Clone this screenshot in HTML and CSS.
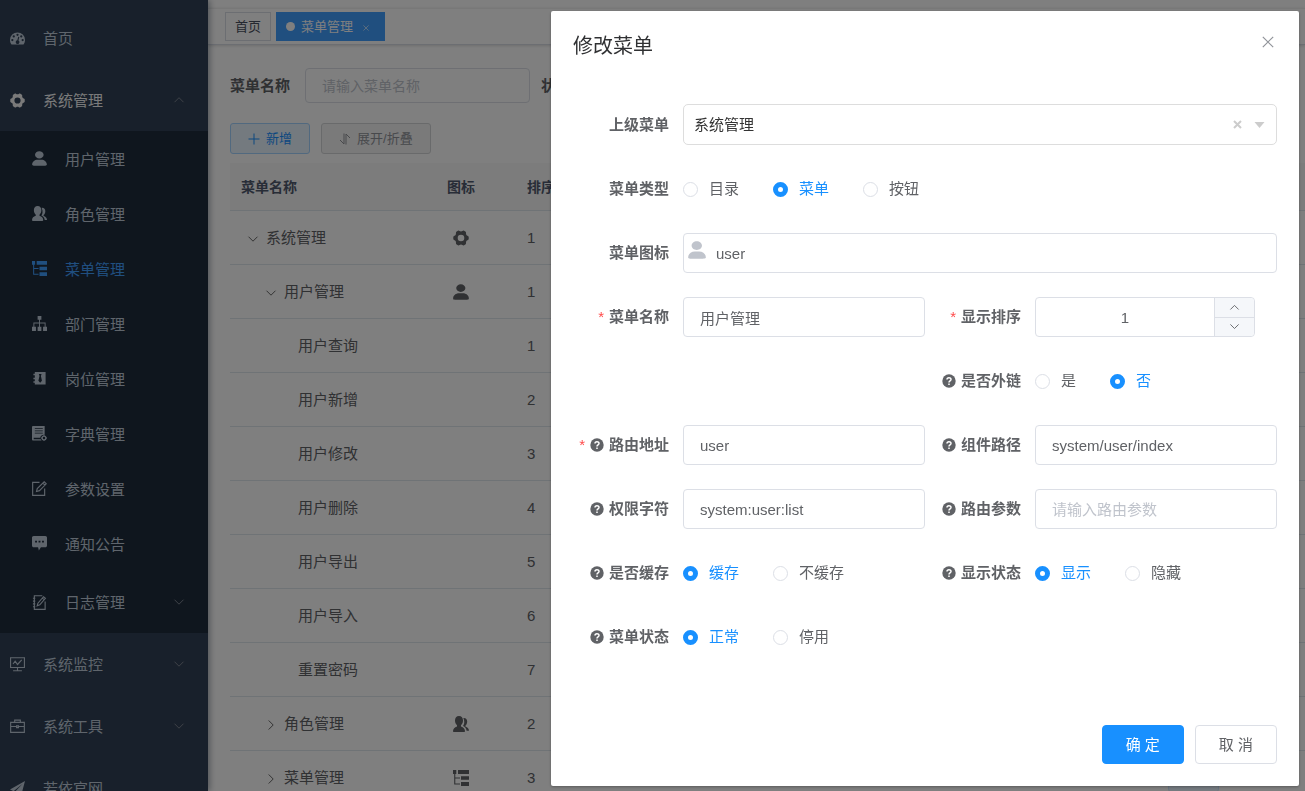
FILE: index.html
```html
<!DOCTYPE html>
<html lang="zh-CN">
<head>
<meta charset="utf-8">
<meta name="viewport" content="width=device-width, initial-scale=1">
<title>菜单管理</title>
<link rel="stylesheet" href="styles.css">
</head>
<body>
<svg class="sprite" aria-hidden="true">
  <symbol id="i-dashboard" viewBox="0 0 16 16"><path fill-rule="evenodd" d="M8 1.500A8 8 0 0 0 0 9.500C0 11.300.6 13 1.600 14.400H14.400C15.400 13 16 11.300 16 9.500A8 8 0 0 0 8 1.500ZM8 2.800a1.200 1.200 0 1 1 0 2.400 1.200 1.200 0 0 1 0-2.400ZM4 4.600a1.200 1.200 0 1 1 0 2.400 1.200 1.200 0 0 1 0-2.400ZM12 4.600a1.200 1.200 0 1 1 0 2.400 1.200 1.200 0 0 1 0-2.400ZM2.500 8.500a1.200 1.200 0 1 1 0 2.400 1.200 1.200 0 0 1 0-2.400ZM13.500 8.500a1.200 1.200 0 1 1 0 2.400 1.200 1.200 0 0 1 0-2.400ZM8.800 6.200 9.900 6.500 9 10a2 2 0 1 1-1.200-.2Z"/></symbol>
  <symbol id="i-system" viewBox="0 0 16 16"><path fill-rule="evenodd" d="M5.300.6C6.200.4 6.700 1.400 8 1.400S9.800.4 10.700.6L12.700 1.800C13.400 2.600 12.700 3.600 13.300 4.700 13.900 5.800 15.300 5.700 15.700 6.700V9.300C15.300 10.300 13.900 10.200 13.300 11.300 12.700 12.400 13.400 13.400 12.700 14.200L10.700 15.400C9.800 15.600 9.300 14.600 8 14.600S6.200 15.600 5.300 15.400L3.300 14.200C2.600 13.400 3.300 12.400 2.700 11.300 2.100 10.200.7 10.300.3 9.300V6.700C.7 5.700 2.100 5.800 2.700 4.700 3.300 3.600 2.600 2.600 3.300 1.800ZM8 4.700A3.300 3.300 0 1 0 8 11.300 3.300 3.300 0 0 0 8 4.700Z"/></symbol>
  <symbol id="i-user" viewBox="0 0 130 130"><path d="M63.444 64.996c20.633 0 37.359-14.308 37.359-31.953 0-17.649-16.726-31.952-37.359-31.952-20.631 0-37.360 14.303-37.360 31.952 0 17.645 16.729 31.953 37.360 31.953zM80.570 75.650H49.434c-26.652 0-48.260 18.477-48.260 41.270v2.664c0 9.316 21.608 9.325 48.260 9.325H80.570c26.649 0 48.256-.344 48.256-9.325v-2.663c0-22.794-21.605-41.271-48.256-41.271z"/></symbol>
  <symbol id="i-peoples" viewBox="0 0 16 16"><path d="M6 0C8.600 0 10 2 10 4.500 10 6.500 9.200 8.200 8 9.200V10.400C10.500 11.200 11.800 12.600 12 15 12 15.700 11.600 16 11 16H1C.4 16 0 15.700 0 15 .2 12.600 1.500 11.200 4 10.400V9.200C2.800 8.200 2 6.500 2 4.500 2 2 3.400 0 6 0Z"/><path d="M10.300 2C12.800 1.700 14.200 3.400 14.200 5.500 14.200 7.400 13.400 8.900 12.400 9.700V10.600C14.500 11.300 15.900 12.700 16 14.800H13.600C13.300 12.500 12 10.900 10 10 11.300 8.500 11.900 5.300 10.300 2Z"/></symbol>
  <symbol id="i-treetable" viewBox="0 0 16 16"><path d="M0 0H3.300V4H0ZM5 0H16V4H5ZM8 6.200H16V9.800H8ZM8 12H16V16H8ZM1.200 4H2.300V7.500H7V8.600H2.300V13.500H7V14.600H1.200Z"/></symbol>
  <symbol id="i-tree" viewBox="0 0 16 16"><path d="M6 0H10V4H8.500V7H14.500V11.500H16V16H11.800V11.500H13.500V8H8.500V11.500H10V16H6V11.500H7.500V8H2.500V11.500H4.200V16H0V11.500H1.500V7H7.500V4H6Z"/></symbol>
  <symbol id="i-post" viewBox="0 0 16 16"><path fill-rule="evenodd" d="M3 1H14.500V14.500H3V12.500H1.500V11H3V8.700H1.500V7.200H3V4.500H1.500V3H3ZM7.300 3.300 8 5.200 6.800 10.500 8.700 12.500 10.600 10.500 9.500 5.200 10.200 3.300Z"/></symbol>
  <symbol id="i-dict" viewBox="0 0 16 16"><path fill-rule="evenodd" d="M1 0H13.500V9.500C11 9.200 9 10.700 8.800 12.500H1.800V14H9.200L10.200 15.500H1.500C.5 15.500 0 15 0 14V1C0 .4.4 0 1 0ZM3 2.200V3H11.500V2.200ZM3 4.700V5.500H11.500V4.700ZM3 7.200V8H11.500V7.200Z"/><circle cx="12.800" cy="12.800" r="2" fill="none" stroke="currentColor" stroke-width="1.400"/><path d="M12.300 9.600h1v1h-1zM12.300 15h1v1h-1zM9.600 12.300h1v1h-1zM15 12.300h1v1h-1z"/></symbol>
  <symbol id="i-edit" viewBox="0 0 16 16"><path d="M8 1.500H.7V15.300H13.500V8M4.800 11.200 5.600 8 13 .8 15.200 3 8 10.300ZM11.600 2.200 13.800 4.400" fill="none" stroke="currentColor" stroke-width="1.200"/></symbol>
  <symbol id="i-message" viewBox="0 0 16 16"><path fill-rule="evenodd" d="M1.800 0H14.200C15.200 0 16 .8 16 1.800V10C16 11.200 15.200 12 14.200 12H9.500L7.300 15.500 6.500 12H1.800C.8 12 0 11.200 0 10V1.800C0 .8.8 0 1.800 0ZM3.300 5V7H5.300V5ZM7 5V7H9V5ZM10.700 5V7H12.700V5Z"/></symbol>
  <symbol id="i-log" viewBox="0 0 16 16"><path d="M11 .8H2.500V15.300H14V7M1 3.500H3.500M1 6.500H3.500M1 9.500H3.500M1 12.500H3.500M5.500 11.500 6.300 8.700 12.300 1.800 14.300 3.500 8.300 10.500ZM11 3.300 13 5" fill="none" stroke="currentColor" stroke-width="1.200"/></symbol>
  <symbol id="i-monitor" viewBox="0 0 16 16"><path d="M.6.8H15.400V11.200H.6ZM8 11.200V14.500M3.300 14.700H12.700M3.200 7.500 5.500 4.500 8 8 12.500 3" fill="none" stroke="currentColor" stroke-width="1.200"/></symbol>
  <symbol id="i-tool" viewBox="0 0 16 16"><path d="M.7 3.600H15.300V14.300H.7ZM5 3.600V1.200H11V3.600M.7 8H6.500M9.500 8H15.300M7 7.300H9V9.200H7Z" fill="none" stroke="currentColor" stroke-width="1.200"/></symbol>
  <symbol id="i-guide" viewBox="0 0 16 16"><path d="M16 0 0 9 3.800 10.900 13.500 3 5.200 11.600V16L7.700 12.800 12 15Z"/></symbol>
  <symbol id="i-down" viewBox="0 0 12 12"><path d="M1.500 3.700 6 8.200 10.500 3.700" fill="none" stroke="currentColor"/></symbol>
  <symbol id="i-up" viewBox="0 0 12 12"><path d="M1.500 8.200 6 3.700 10.500 8.200" fill="none" stroke="currentColor"/></symbol>
  <symbol id="i-right" viewBox="0 0 12 12"><path d="M3.700 1.500 8.200 6 3.700 10.500" fill="none" stroke="currentColor"/></symbol>
  <symbol id="i-close" viewBox="0 0 12 12"><path d="M.8.8 11.200 11.200M11.200.8.8 11.200" fill="none" stroke="currentColor" stroke-width="1.200"/></symbol>
  <symbol id="i-clear" viewBox="0 0 9 9"><path d="M1 1 8 8M8 1 1 8" fill="none" stroke="currentColor" stroke-width="2"/></symbol>
  <symbol id="i-plus" viewBox="0 0 12 12"><path d="M6 .5V11.500M.5 6H11.500" fill="none" stroke="currentColor"/></symbol>
  <symbol id="i-sort" viewBox="0 0 12 12"><path d="M5 .5V11L1 7M7 11.500V1L11 5" fill="none" stroke="currentColor"/></symbol>
  <symbol id="i-caret" viewBox="0 0 10 6"><path d="M0 0H10L5 6Z"/></symbol>
  <symbol id="i-help" viewBox="0 0 14 14"><circle cx="7" cy="7" r="6.700"/><path d="M5 5.600C5 3.200 9 3.200 9 5.500 9 7 7 6.900 7 8.500M7 9.600V11" fill="none" stroke="#fff" stroke-width="1.500"/></symbol>
</svg>

<div class="app">
  <nav class="sidebar" aria-label="主菜单">
    <a class="item" href="#"><svg class="icon"><use href="#i-dashboard"/></svg><span>首页</span></a>
    <a class="item open" href="#"><svg class="icon"><use href="#i-system"/></svg><span>系统管理</span><svg class="arrow"><use href="#i-up"/></svg></a>
    <div class="submenu">
      <a class="item" href="#"><svg class="icon"><use href="#i-user"/></svg><span>用户管理</span></a>
      <a class="item" href="#"><svg class="icon"><use href="#i-peoples"/></svg><span>角色管理</span></a>
      <a class="item active" href="#"><svg class="icon"><use href="#i-treetable"/></svg><span>菜单管理</span></a>
      <a class="item" href="#"><svg class="icon"><use href="#i-tree"/></svg><span>部门管理</span></a>
      <a class="item" href="#"><svg class="icon"><use href="#i-post"/></svg><span>岗位管理</span></a>
      <a class="item" href="#"><svg class="icon"><use href="#i-dict"/></svg><span>字典管理</span></a>
      <a class="item" href="#"><svg class="icon"><use href="#i-edit"/></svg><span>参数设置</span></a>
      <a class="item" href="#"><svg class="icon"><use href="#i-message"/></svg><span>通知公告</span></a>
      <a class="item parent" href="#"><svg class="icon"><use href="#i-log"/></svg><span>日志管理</span><svg class="arrow"><use href="#i-down"/></svg></a>
    </div>
    <a class="item" href="#"><svg class="icon"><use href="#i-monitor"/></svg><span>系统监控</span><svg class="arrow"><use href="#i-down"/></svg></a>
    <a class="item" href="#"><svg class="icon"><use href="#i-tool"/></svg><span>系统工具</span><svg class="arrow"><use href="#i-down"/></svg></a>
    <a class="item" href="#"><svg class="icon"><use href="#i-guide"/></svg><span>若依官网</span></a>
  </nav>

  <main class="main">
    <div class="tags">
      <a class="tag" href="#">首页</a>
      <a class="tag current" href="#"><i class="dot"></i>菜单管理<svg class="tag-close"><use href="#i-close"/></svg></a>
    </div>
    <div class="content">
      <form class="search">
        <label for="q-name">菜单名称</label>
        <input id="q-name" type="text" placeholder="请输入菜单名称">
        <label for="q-status">状态</label>
        <input id="q-status" type="text">
      </form>
      <div class="toolbar">
        <button class="tool primary" type="button"><svg><use href="#i-plus"/></svg>新增</button>
        <button class="tool" type="button"><svg><use href="#i-sort"/></svg>展开/折叠</button>
      </div>
      <table class="grid">
        <colgroup><col class="c-name"><col class="c-icon"><col class="c-sort"><col><col class="c-status"></colgroup>
        <thead><tr><th>菜单名称</th><th class="mid">图标</th><th>排序</th><th></th><th></th></tr></thead>
        <tbody>
          <tr><td class="l1"><svg class="exp"><use href="#i-down"/></svg>系统管理</td><td class="mid"><svg class="icon"><use href="#i-system"/></svg></td><td>1</td><td></td><td></td></tr>
          <tr><td class="l2"><svg class="exp"><use href="#i-down"/></svg>用户管理</td><td class="mid"><svg class="icon"><use href="#i-user"/></svg></td><td>1</td><td></td><td></td></tr>
          <tr><td class="l3">用户查询</td><td></td><td>1</td><td></td><td></td></tr>
          <tr><td class="l3">用户新增</td><td></td><td>2</td><td></td><td></td></tr>
          <tr><td class="l3">用户修改</td><td></td><td>3</td><td></td><td></td></tr>
          <tr><td class="l3">用户删除</td><td></td><td>4</td><td></td><td></td></tr>
          <tr><td class="l3">用户导出</td><td></td><td>5</td><td></td><td></td></tr>
          <tr><td class="l3">用户导入</td><td></td><td>6</td><td></td><td></td></tr>
          <tr><td class="l3">重置密码</td><td></td><td>7</td><td></td><td></td></tr>
          <tr><td class="l2"><svg class="exp"><use href="#i-right"/></svg>角色管理</td><td class="mid"><svg class="icon"><use href="#i-peoples"/></svg></td><td>2</td><td></td><td></td></tr>
          <tr><td class="l2"><svg class="exp"><use href="#i-right"/></svg>菜单管理</td><td class="mid"><svg class="icon"><use href="#i-treetable"/></svg></td><td>3</td><td></td><td><span class="status"></span></td></tr>
        </tbody>
      </table>
    </div>
  </main>
</div>

<div class="overlay">
  <section class="dialog" role="dialog" aria-modal="true" aria-labelledby="dlg-title">
    <header class="dialog-head">
      <h1 id="dlg-title">修改菜单</h1>
      <button class="close" type="button" aria-label="关闭"><svg><use href="#i-close"/></svg></button>
    </header>
    <form class="form">
      <div class="field wide">
        <label class="label" for="f-parent">上级菜单</label>
        <div class="tree-select">
          <select id="f-parent"><option>系统管理</option></select>
          <div class="select-tools">
            <button type="button" aria-label="清除"><svg class="clear"><use href="#i-clear"/></svg></button>
            <svg class="caret"><use href="#i-caret"/></svg>
          </div>
        </div>
      </div>
      <div class="field wide">
        <span class="label" id="l-type">菜单类型</span>
        <div class="radios" role="radiogroup" aria-labelledby="l-type">
          <label><input type="radio" name="type"><span>目录</span></label>
          <label><input type="radio" name="type" checked><span>菜单</span></label>
          <label><input type="radio" name="type"><span>按钮</span></label>
        </div>
      </div>
      <div class="field wide">
        <label class="label" for="f-icon">菜单图标</label>
        <div class="icon-box"><svg><use href="#i-user"/></svg><input id="f-icon" type="text" value="user" readonly></div>
      </div>
      <div class="field">
        <label class="label" for="f-name"><b class="req">*</b>菜单名称</label>
        <input class="text" id="f-name" type="text" value="用户管理">
      </div>
      <div class="field">
        <label class="label" for="f-sort"><b class="req">*</b>显示排序</label>
        <div class="number">
          <input id="f-sort" type="text" inputmode="numeric" value="1">
          <div class="steps">
            <button type="button" aria-label="增加"><svg><use href="#i-up"/></svg></button>
            <button type="button" aria-label="减少"><svg><use href="#i-down"/></svg></button>
          </div>
        </div>
      </div>
      <div class="field second">
        <span class="label" id="l-frame"><svg class="help"><use href="#i-help"/></svg>是否外链</span>
        <div class="radios" role="radiogroup" aria-labelledby="l-frame">
          <label><input type="radio" name="frame"><span>是</span></label>
          <label><input type="radio" name="frame" checked><span>否</span></label>
        </div>
      </div>
      <div class="field">
        <label class="label" for="f-path"><b class="req">*</b><svg class="help"><use href="#i-help"/></svg>路由地址</label>
        <input class="text" id="f-path" type="text" value="user">
      </div>
      <div class="field">
        <label class="label" for="f-comp"><svg class="help"><use href="#i-help"/></svg>组件路径</label>
        <input class="text" id="f-comp" type="text" value="system/user/index">
      </div>
      <div class="field">
        <label class="label" for="f-perms"><svg class="help"><use href="#i-help"/></svg>权限字符</label>
        <input class="text" id="f-perms" type="text" value="system:user:list">
      </div>
      <div class="field">
        <label class="label" for="f-query"><svg class="help"><use href="#i-help"/></svg>路由参数</label>
        <input class="text" id="f-query" type="text" placeholder="请输入路由参数">
      </div>
      <div class="field">
        <span class="label" id="l-cache"><svg class="help"><use href="#i-help"/></svg>是否缓存</span>
        <div class="radios" role="radiogroup" aria-labelledby="l-cache">
          <label><input type="radio" name="cache" checked><span>缓存</span></label>
          <label><input type="radio" name="cache"><span>不缓存</span></label>
        </div>
      </div>
      <div class="field">
        <span class="label" id="l-visible"><svg class="help"><use href="#i-help"/></svg>显示状态</span>
        <div class="radios" role="radiogroup" aria-labelledby="l-visible">
          <label><input type="radio" name="visible" checked><span>显示</span></label>
          <label><input type="radio" name="visible"><span>隐藏</span></label>
        </div>
      </div>
      <div class="field">
        <span class="label" id="l-status"><svg class="help"><use href="#i-help"/></svg>菜单状态</span>
        <div class="radios" role="radiogroup" aria-labelledby="l-status">
          <label><input type="radio" name="status" checked><span>正常</span></label>
          <label><input type="radio" name="status"><span>停用</span></label>
        </div>
      </div>
    </form>
    <footer class="dialog-foot">
      <button class="btn primary" type="button">确 定</button>
      <button class="btn" type="button">取 消</button>
    </footer>
  </section>
</div>
</body>
</html>
```
FILE: styles.css
```css
* { box-sizing: border-box; }

body {
  margin: 0;
  overflow: hidden;
  background: #fff;
  color: #606266;
  font: 15px/20px "Liberation Sans", "Noto Sans CJK SC", sans-serif;
}

input, select, button { font: inherit; color: inherit; margin: 0; }
button { cursor: pointer; }
a { color: inherit; text-decoration: none; }
svg { display: block; flex: none; fill: currentColor; }
.sprite { position: absolute; width: 0; height: 0; }

.app { display: flex; height: 100vh; overflow: hidden; }

/* Sidebar */
.sidebar {
  flex: none;
  width: 208px;
  padding-top: 7px;
  overflow: hidden;
  z-index: 1;
  background: #304156;
  color: #bfcbd9;
  box-shadow: 2px 0 6px rgba(0, 21, 41, .35);
}
.item { display: flex; align-items: center; height: 62px; padding: 0 23px 0 10px; }
.item .icon { width: 15px; height: 15px; margin-right: 18px; }
.item span { padding-top: 2px; }
.item .arrow { width: 12px; height: 12px; margin-left: auto; color: #7d8490; }
.item.open { color: #f4f4f5; }
.item.active { color: #409eff; }
.submenu { background: #1f2d3d; }
.submenu .item { height: 55px; padding-left: 32px; }
.submenu .item.parent { height: 62px; }

/* Tabs */
.main { flex: 1; min-width: 0; padding-top: 8px; overflow: hidden; }
.tags {
  display: flex;
  align-items: center;
  gap: 5px;
  height: 37px;
  padding: 0 17px;
  border-top: 1px solid #f0f0f0;
  border-bottom: 1px solid #d8dce5;
  box-shadow: 0 1px 3px rgba(0, 0, 0, .12), 0 0 3px rgba(0, 0, 0, .04);
}
.tag {
  display: flex;
  align-items: center;
  height: 29px;
  padding: 0 9px;
  border: 1px solid #d8dce5;
  color: #495060;
  font-size: 13px;
}
.tag.current { border-color: #409eff; background: #409eff; color: #fff; }
.dot { width: 9px; height: 9px; margin-right: 6px; border-radius: 50%; background: #fff; }
.tag-close { width: 6px; height: 6px; margin: 2px 6px 0 10px; }

/* Page content */
.content { padding: 23px 22px; }
.search { display: flex; align-items: center; font-size: 14px; }
.search label { flex: none; margin-right: 15px; font-size: 15px; font-weight: 700; }
.search input {
  flex: none;
  width: 225px;
  height: 35px;
  margin-right: 11px;
  padding: 0 16px;
  border: 1px solid #dcdfe6;
  border-radius: 4px;
  background: #fff;
}
::placeholder { color: #c0c4cc; opacity: 1; }
.toolbar { display: flex; gap: 11px; margin: 20px 0 9px; }
.tool {
  display: flex;
  align-items: center;
  gap: 6px;
  height: 31px;
  padding: 0 17px;
  border: 1px solid #d3d4d6;
  border-radius: 3px;
  background: #f4f4f5;
  color: #909399;
  font-size: 13px;
}
.tool svg { width: 12px; height: 12px; }
.tool.primary { border-color: #a3d3ff; background: #e8f4ff; color: #1890ff; }

.grid { width: 100%; min-width: 1075px; table-layout: fixed; border-spacing: 0; }
.c-name { width: 176px; }
.c-icon { width: 110px; }
.c-sort { width: 66px; }
.c-status { width: 148px; }
.grid th, .grid td {
  height: 54px;
  padding: 0 11px;
  border-bottom: 1px solid #dfe6ec;
  text-align: left;
  white-space: nowrap;
}
.grid th {
  height: 48px;
  background: #f8f8f9;
  color: #515a6e;
  font-size: 14px;
}
.grid .mid { text-align: center; }
.grid .icon { width: 16px; height: 16px; margin: 0 auto; }
.exp { display: inline-block; width: 12px; height: 12px; margin-right: 7px; vertical-align: -2px; color: #666; }
.grid .l1 { padding-left: 17px; }
.grid .l2 { padding-left: 35px; }
.grid .l3 { padding-left: 68px; }
.status {
  display: block;
  width: 51px;
  height: 30px;
  border: 1px solid #d1e9ff;
  border-radius: 4px;
  background: #e8f4ff;
}

/* Dialog */
.overlay {
  position: fixed;
  inset: 0;
  z-index: 10;
  display: flex;
  align-items: flex-start;
  justify-content: flex-end;
  padding: 11px 6px;
  background: rgba(0, 0, 0, .5);
}
.dialog {
  width: 748px;
  max-width: 100%;
  padding: 22px;
  border-radius: 2px;
  background: #fff;
  box-shadow: 0 1px 3px rgba(0, 0, 0, .3);
}
.dialog-head { display: flex; justify-content: space-between; margin-bottom: 45px; }
.dialog-head h1 {
  margin: 0;
  color: #303133;
  font-size: 20px;
  font-weight: 400;
  line-height: 26px;
}
.close { height: 18px; padding: 3px; border: 0; background: none; color: #909399; }
.close svg { width: 12px; height: 12px; }

.form { display: grid; grid-template-columns: 1fr 1fr; gap: 24px 0; }
.field { display: flex; align-items: center; min-width: 0; min-height: 40px; }
.wide { grid-column: 1 / -1; }
.second { grid-column: 2; }
.label {
  display: flex;
  flex: none;
  align-items: center;
  justify-content: flex-end;
  width: 110px;
  padding-right: 14px;
  font-weight: 700;
}
.help { width: 14px; height: 14px; margin-right: 5px; }
.req { margin-right: 5px; color: #ff4949; font-weight: 400; }

.text, .icon-box input, .number input, .tree-select select {
  width: 100%;
  min-width: 0;
  height: 40px;
  padding: 0 16px;
  border: 1px solid #dcdfe6;
  border-radius: 4px;
  background: #fff;
}
.text { flex: 1; }
.tree-select, .icon-box { position: relative; flex: 1; }
.tree-select select {
  display: block;
  height: 41px;
  padding: 0 56px 0 10px;
  border-color: #ddd;
  border-radius: 5px;
  appearance: none;
  color: #333;
}
.select-tools {
  position: absolute;
  inset: 0 12px 0 auto;
  display: flex;
  align-items: center;
  gap: 12px;
  color: #ccc;
}
.select-tools button { padding: 0; border: 0; background: none; }
.clear { width: 9px; height: 9px; }
.caret { width: 11px; height: 6px; }
.icon-box svg { position: absolute; left: 5px; top: 8px; width: 18px; height: 18px; color: #c0c4cc; }
.icon-box input { display: block; padding-left: 32px; }

.number { position: relative; width: 220px; }
.number input { display: block; padding: 0 40px 0 0; text-align: center; }
.steps {
  position: absolute;
  inset: 1px 1px 1px auto;
  display: flex;
  flex-direction: column;
  width: 40px;
  border-left: 1px solid #dcdfe6;
  border-radius: 0 4px 4px 0;
  background: #f5f7fa;
}
.steps button {
  display: flex;
  flex: 1;
  align-items: center;
  justify-content: center;
  padding: 0;
  border: 0;
  background: none;
}
.steps button + button { border-top: 1px solid #dcdfe6; }
.steps svg { width: 11px; height: 11px; }

.radios { display: flex; gap: 34px; }
.radios label { display: flex; align-items: center; gap: 11px; cursor: pointer; }
.radios input {
  width: 15px;
  height: 15px;
  border: 1px solid #dcdfe6;
  border-radius: 50%;
  appearance: none;
  background: #fff;
}
.radios input:checked { border: 5px solid #1890ff; }
.radios input:checked + span { color: #1890ff; }

.dialog-foot { display: flex; justify-content: flex-end; gap: 11px; margin-top: 68px; }
.btn {
  height: 39px;
  padding: 0 23px;
  border: 1px solid #dcdfe6;
  border-radius: 4px;
  background: #fff;
}
.btn.primary { border-color: #1890ff; background: #1890ff; color: #fff; }
```
